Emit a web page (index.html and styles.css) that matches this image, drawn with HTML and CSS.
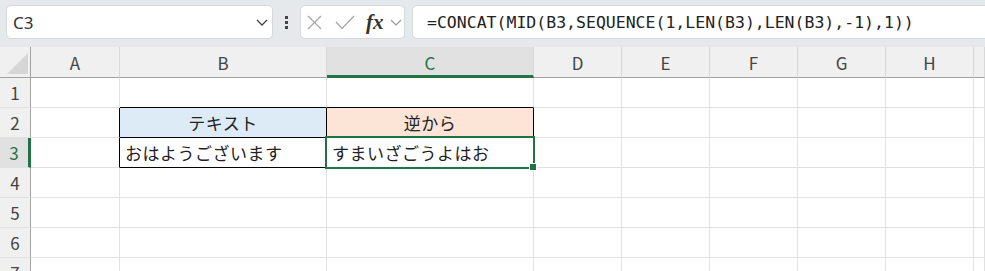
FILE: index.html
```html
<!DOCTYPE html>
<html lang="ja">
<head>
    <meta charset="UTF-8">
    <title>CONCAT MID SEQUENCE</title>
    <link rel="stylesheet" href="styles.css">
</head>
<body>
    <!-- Formula bar -->
    <div class="toolbar">
        <div class="name-box">
            <span class="name-text">C3</span>
            <svg class="chev" width="12" height="7" viewBox="0 0 12 7"><path d="M1 1 L6 6 L11 1" fill="none" stroke="#444" stroke-width="1.3"/></svg>
        </div>
        <div class="grip"><span></span><span></span><span></span></div>
        <div class="fx-box">
            <svg class="icon-x" width="15" height="15" viewBox="0 0 15 15"><path d="M1 1 L14 14 M14 1 L1 14" stroke="#a8a8a8" stroke-width="1.3"/></svg>
            <svg class="icon-ok" width="20" height="15" viewBox="0 0 20 15"><path d="M1 7 L7 13.5 L19 1" fill="none" stroke="#a8a8a8" stroke-width="1.3"/></svg>
            <span class="fx">fx</span>
            <svg class="chev-small" width="12" height="7" viewBox="0 0 12 7"><path d="M1 1 L6 6 L11 1" fill="none" stroke="#9a9a9a" stroke-width="1.2"/></svg>
        </div>
        <div class="formula-box">=CONCAT(MID(B3,SEQUENCE(1,LEN(B3),LEN(B3),-1),1))</div>
    </div>

    <!-- Sheet grid -->
    <div class="sheet">
        <div class="corner"><div class="corner-tri"></div></div>
        <div class="col-head">A</div>
        <div class="col-head">B</div>
        <div class="col-head active">C</div>
        <div class="col-head">D</div>
        <div class="col-head">E</div>
        <div class="col-head">F</div>
        <div class="col-head">G</div>
        <div class="col-head">H</div>
        <div class="col-head"></div>

        <div class="row-head">1</div>
        <div class="cell"></div>
        <div class="cell edge-bottom"></div>
        <div class="cell edge-bottom"></div>
        <div class="cell"></div><div class="cell"></div><div class="cell"></div><div class="cell"></div><div class="cell"></div><div class="cell"></div>

        <div class="row-head">2</div>
        <div class="cell edge-right"></div>
        <div class="cell boxed head-blue">テキスト</div>
        <div class="cell boxed head-peach">逆から</div>
        <div class="cell"></div><div class="cell"></div><div class="cell"></div><div class="cell"></div><div class="cell"></div><div class="cell"></div>

        <div class="row-head active">3</div>
        <div class="cell edge-right"></div>
        <div class="cell boxed">おはようございます</div>
        <div class="cell boxed selected">すまいざごうよはお<div class="selection"><span class="handle"></span></div></div>
        <div class="cell"></div><div class="cell"></div><div class="cell"></div><div class="cell"></div><div class="cell"></div><div class="cell"></div>

        <div class="row-head">4</div>
        <div class="cell"></div><div class="cell"></div><div class="cell"></div><div class="cell"></div><div class="cell"></div><div class="cell"></div><div class="cell"></div><div class="cell"></div><div class="cell"></div>

        <div class="row-head">5</div>
        <div class="cell"></div><div class="cell"></div><div class="cell"></div><div class="cell"></div><div class="cell"></div><div class="cell"></div><div class="cell"></div><div class="cell"></div><div class="cell"></div>

        <div class="row-head">6</div>
        <div class="cell"></div><div class="cell"></div><div class="cell"></div><div class="cell"></div><div class="cell"></div><div class="cell"></div><div class="cell"></div><div class="cell"></div><div class="cell"></div>

        <div class="row-head">7</div>
        <div class="cell"></div><div class="cell"></div><div class="cell"></div><div class="cell"></div><div class="cell"></div><div class="cell"></div><div class="cell"></div><div class="cell"></div><div class="cell"></div>
    </div>
</body>
</html>
```

FILE: styles.css
```css
body {
    margin: 0;
    overflow: hidden;
    background: #ffffff;
    font-family: "Noto Sans CJK JP", "Noto Sans", sans-serif;
}

/* Formula bar */
.toolbar {
    display: flex;
    align-items: center;
    height: 47px;
    padding: 0 0 0 6px;
    box-sizing: border-box;
    background: #e6e9ec;
}

.toolbar > div {
    margin-top: -3px;
}

.name-box,
.fx-box,
.formula-box {
    height: 34px;
    box-sizing: border-box;
    background: #ffffff;
    border: 1px solid #d6d9dc;
    border-radius: 5px;
    display: flex;
    align-items: center;
}

.name-box {
    width: 267px;
    padding: 0 4px 0 6px;
    justify-content: space-between;
}

.name-text {
    font-family: "Noto Sans", sans-serif;
    font-size: 17px;
    color: #333333;
}

.grip {
    width: 27px;
    display: flex;
    flex-direction: column;
    align-items: center;
    gap: 2px;
}

.grip span {
    width: 3px;
    height: 3px;
    background: #444444;
}

.fx-box {
    width: 105px;
    padding: 0 0 0 6px;
}

.icon-x {
    margin-right: 13px;
}

.icon-ok {
    margin-right: 11px;
}

.fx {
    font-family: "Liberation Serif", serif;
    font-style: italic;
    font-weight: bold;
    font-size: 21px;
    color: #333333;
    margin-right: 6px;
    line-height: 1;
}

.formula-box {
    flex: 1;
    margin-left: 7px;
    margin-right: -12px;
    padding-left: 14px;
    font-family: "DejaVu Sans Mono", monospace;
    font-size: 16.5px;
    color: #222222;
    white-space: nowrap;
}

/* Sheet grid */
.sheet {
    display: grid;
    grid-template-columns: 31px 89px 207px 207px repeat(5, 88px) 1fr;
    grid-template-rows: 31px repeat(7, 30px);
    font-size: 17px;
}

.sheet > div {
    box-sizing: border-box;
    border-right: 1px solid #e1e1e1;
    border-bottom: 1px solid #e1e1e1;
}

.corner {
    background: #f0f0f0;
    border-bottom: 1px solid #a3a3a3 !important;
    border-right: 1px solid #a3a3a3 !important;
    position: relative;
}

.corner-tri {
    position: absolute;
    right: 2px;
    bottom: 3px;
    width: 0;
    height: 0;
    border-left: 21px solid transparent;
    border-bottom: 21px solid #d6d6d6;
}

.col-head {
    background: #f0f0f0;
    color: #444444;
    display: flex;
    align-items: center;
    justify-content: center;
    border-right-color: #d8d8d8 !important;
    border-bottom: 1px solid #a3a3a3 !important;
}

.col-head.active {
    background: #e1e1e1;
    color: #217346;
    border-bottom: 3px solid #217346 !important;
    padding-top: 2px;
}

.row-head {
    background: #f0f0f0;
    color: #444444;
    display: flex;
    align-items: center;
    justify-content: center;
    border-right: 1px solid #a3a3a3 !important;
    border-bottom-color: #e1e1e1;
}

.row-head.active {
    background: #e1e1e1;
    color: #217346;
    border-right: 3px solid #217346 !important;
}

.cell {
    display: flex;
    align-items: center;
    padding-left: 5px;
    color: #222222;
    white-space: nowrap;
    letter-spacing: 0.5px;
}

.edge-bottom {
    border-bottom-color: #000000 !important;
}

.edge-right {
    border-right-color: #000000 !important;
}

.boxed {
    border-right-color: #000000 !important;
    border-bottom-color: #000000 !important;
}

.head-blue {
    background: #ddebf7;
    justify-content: center;
    padding-left: 0;
}

.head-peach {
    background: #fce4d6;
    justify-content: center;
    padding-left: 0;
}

.selected {
    position: relative;
}

.selection {
    position: absolute;
    top: -2px;
    left: -2px;
    right: -2px;
    bottom: -2px;
    border: 2px solid #217346;
    pointer-events: none;
}

.handle {
    position: absolute;
    right: -4px;
    bottom: -4px;
    width: 6px;
    height: 6px;
    background: #217346;
    border: 1px solid #ffffff;
}
```
